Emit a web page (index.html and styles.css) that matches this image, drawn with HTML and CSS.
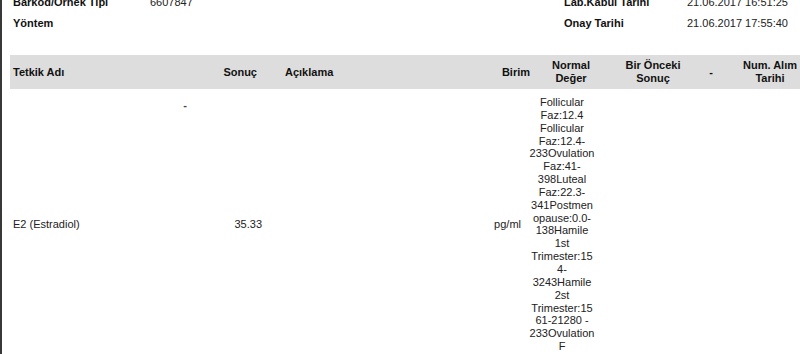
FILE: index.html
```html
<!DOCTYPE html>
<html lang="tr">
<head>
<meta charset="utf-8">
<title>Sonuç</title>
<link rel="stylesheet" href="styles.css">
</head>
<body>
<div class="page">
  <div class="info">
    <div class="info-row">
      <div class="lbl">Barkod/Örnek Tipi</div>
      <div class="val">6607847</div>
      <div class="lbl lbl-r">Lab.Kabul Tarihi</div>
      <div class="val">21.06.2017 16:51:25</div>
    </div>
    <div class="info-row">
      <div class="lbl">Yöntem</div>
      <div class="val"></div>
      <div class="lbl lbl-r">Onay Tarihi</div>
      <div class="val">21.06.2017 17:55:40</div>
    </div>
  </div>

  <div class="grid head">
    <div class="c1">Tetkik Adı</div>
    <div class="c2">Sonuç</div>
    <div class="c3">Açıklama</div>
    <div class="c4">Birim</div>
    <div class="c5">Normal<br>Değer</div>
    <div class="c6">Bir Önceki<br>Sonuç</div>
    <div class="c7">-</div>
    <div class="c8">Num. Alım<br>Tarihi</div>
  </div>

  <div class="grid row">
    <div class="c1 dash">-</div>
    <div class="c1">E2 (Estradiol)</div>
    <div class="c2">35.33</div>
    <div class="c3"></div>
    <div class="c4">pg/ml</div>
    <div class="c5">Follicular<br>Faz:12.4<br>Follicular<br>Faz:12.4-<br>233Ovulation<br>Faz:41-<br>398Luteal<br>Faz:22.3-<br>341Postmen<br>opause:0.0-<br>138Hamile<br>1st<br>Trimester:15<br>4-<br>3243Hamile<br>2st<br>Trimester:15<br>61-21280 -<br>233Ovulation<br>F</div>
    <div class="c6"></div>
    <div class="c7"></div>
    <div class="c8"></div>
  </div>
</div>
</body>
</html>
```

FILE: styles.css
```css
html, body {
  margin: 0;
  padding: 0;
  background: #ffffff;
  min-height: 100%;
}
body {
  border-left: 2px solid #383838;
  min-height: 354px;
  box-sizing: border-box;
  font-family: "Liberation Sans", Arial, sans-serif;
  font-size: 11px;
  color: #222;
  overflow: hidden;
}
.page {
  padding-left: 8px;
  width: 790px;
}
.info {
  margin-top: -8px;
  margin-bottom: 21px;
}
.info-row {
  display: grid;
  grid-template-columns: 137px 414px 123px 1fr;
  height: 21px;
  line-height: 21px;
  padding-left: 3px;
}
.lbl {
  font-weight: bold;
  color: #111;
}
.val {
  color: #222;
}
.grid {
  display: grid;
  grid-template-columns: 180px 75px 215px 47px 70px 105px 18px 80px;
}
.head {
  background: #dddddd;
  height: 34px;
  align-items: center;
  font-weight: bold;
  color: #111;
  line-height: 12.6px;
}
.head .c1 { padding-left: 3px; }
.head .c2 { text-align: right; padding-right: 8px; }
.head .c3 { padding-left: 20px; }
.head .c4 { text-align: right; padding-right: 0; margin-right: -3px; }
.head .c5 { text-align: center; padding-left: 18px; }
.head .c6 { text-align: center; padding-left: 7px; }
.head .c7 { text-align: center; }
.head .c8 { text-align: center; padding-left: 20px; white-space: nowrap; }

.row {
  align-items: center;
  padding: 7px 0;
  line-height: 12.85px;
  color: #222;
}
.row .c1 { grid-column: 1; grid-row: 1; padding-left: 3px; }
.row .dash {
  align-self: start;
  justify-self: end;
  margin-top: 3px;
  padding-right: 3px;
  font-weight: bold;
  color: #444;
}
.row .c2 { text-align: right; padding-right: 3px; }
.row .c4 { text-align: right; padding-right: 6px; }
.row .c5 { text-align: center; }
```
